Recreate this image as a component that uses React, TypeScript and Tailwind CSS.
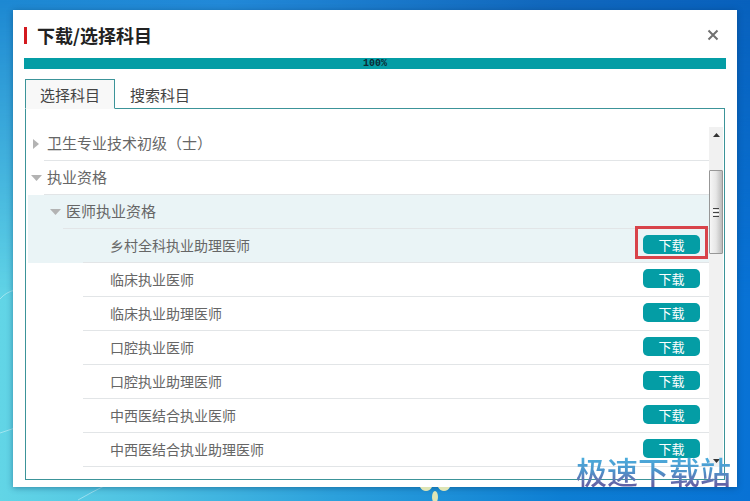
import { useState } from "react";
import clsx from "clsx";

interface Row {
  name: string;
  level: 1 | 2 | 3;
  open?: boolean;
  active?: boolean;
  marked?: boolean;
}

const ROWS: Row[] = [
  { name: "卫生专业技术初级（士）", level: 1 },
  { name: "执业资格", level: 1, open: true },
  { name: "医师执业资格", level: 2, open: true, active: true },
  { name: "乡村全科执业助理医师", level: 3, active: true, marked: true },
  { name: "临床执业医师", level: 3 },
  { name: "临床执业助理医师", level: 3 },
  { name: "口腔执业医师", level: 3 },
  { name: "口腔执业助理医师", level: 3 },
  { name: "中西医结合执业医师", level: 3 },
  { name: "中西医结合执业助理医师", level: 3 },
];

const TABS = ["选择科目", "搜索科目"];

function Arrow({ open }: { open?: boolean }) {
  return (
    <span className="flex w-4 shrink-0 justify-center">
      {open ? (
        <svg width="11" height="6" viewBox="0 0 11 6" fill="#b3b3b3">
          <path d="M0 0h11L5.5 6z" />
        </svg>
      ) : (
        <svg width="6" height="10" viewBox="0 0 6 10" fill="#b3b3b3">
          <path d="M0 0v10l6-5z" />
        </svg>
      )}
    </span>
  );
}

function TreeRow({ row }: { row: Row }) {
  if (row.level === 3) {
    return (
      <li className={clsx("pl-[55px]", row.active && "bg-[#eaf4f6]")}>
        <div className="flex h-[34px] items-center justify-between border-b border-[#e2e5e7] pr-[9px] pb-[2px] pl-[27px] text-sm text-[#666]">
          {row.name}
          <div className="relative flex">
            <button className="h-[19px] w-[57px] rounded-[5px] bg-[#049da5] text-[13px] leading-[19px] text-white">
              下载
            </button>
            {row.marked && (
              <span className="pointer-events-none absolute -inset-x-2 -top-[9px] -bottom-[5px] border-[3px] border-[#d8434a]" />
            )}
          </div>
        </div>
      </li>
    );
  }

  return (
    <li className={clsx("flex", row.level === 2 && "pl-[19px]", row.active && "bg-[#eaf4f6]")}>
      <button className="flex flex-1 items-center text-left text-[15px] text-[#666]">
        <Arrow open={row.open} />
        <span className="flex h-[34px] flex-1 items-center border-b border-[#e2e5e7] pl-[3px]">{row.name}</span>
      </button>
    </li>
  );
}

function ScrollBar() {
  return (
    <div className="flex w-[14px] flex-col items-center bg-[#f1f1f1]">
      <svg className="mt-[6px]" width="7" height="4" viewBox="0 0 7 4" fill="#333">
        <path d="M3.5 0L7 4H0z" />
      </svg>
      <div className="mt-[33px] flex h-[84px] w-full flex-col items-center justify-center gap-px rounded-[1px] border border-[#979797] bg-linear-to-r from-[#f6f6f6] via-[#e6e6e6] to-[#bcbcbc]">
        <span className="h-px w-[6px] bg-[#444]" />
        <span className="h-px w-[6px] bg-white" />
        <span className="h-px w-[6px] bg-[#444]" />
        <span className="h-px w-[6px] bg-white" />
        <span className="h-px w-[6px] bg-[#444]" />
      </div>
      <svg className="mt-auto mb-1" width="7" height="4" viewBox="0 0 7 4" fill="#333">
        <path d="M0 0h7L3.5 4z" />
      </svg>
    </div>
  );
}

export default function App() {
  const [tab, setTab] = useState(0);

  return (
    <div className="relative min-h-screen overflow-hidden bg-[linear-gradient(90deg,#1d88d2_0%,#2289d8_30%,#1268bd_72%,#0861bd_100%)] px-[13px] pt-[10px] pb-[13px] font-['Noto_Sans_CJK_SC',sans-serif]">
      {/* Desktop wallpaper */}
      <div className="absolute inset-0 bg-[linear-gradient(90deg,#62d5e6_0%,#4cc0e2_20%,#2ba0dc_45%,#0d7ed3_75%,#0872d5_100%)] mask-[linear-gradient(transparent,black_60%)]" />
      <svg className="absolute inset-x-0 bottom-0" width="160" height="240" viewBox="0 0 160 240" fill="none" stroke="#fff" strokeOpacity=".4">
        <path d="M0 38Q6 31 15 29M0 172l15-5M78 239q14-8 28-15" />
      </svg>

      <main className="relative bg-white px-[11px] pb-[7px] shadow-[0_1px_6px_rgba(0,50,90,0.45)]">
        <header className="flex h-12 items-center justify-between pt-[2px] pr-[7px]">
          <h1 className="flex items-center gap-[10px] text-lg leading-6 font-bold text-[#222]">
            <span className="h-[17px] w-[3px] bg-[#d3191f]" />
            下载/选择科目
          </h1>
          <button aria-label="关闭">
            <svg width="12" height="12" viewBox="0 0 12 12" stroke="#707070" strokeWidth="2">
              <path d="M1.5 1.5l9 9M10.5 1.5l-9 9" />
            </svg>
          </button>
        </header>

        <div
          role="progressbar"
          aria-valuenow={100}
          className="h-[11px] bg-[#049da5] text-center font-['Liberation_Mono',monospace] text-[10px] leading-[11px] font-bold text-[#0b2a33]"
        >
          100%
        </div>

        <div className="mx-px mt-[10px]">
          <div role="tablist" className="relative z-10 -mb-px flex text-[15px] text-[#444]">
            {TABS.map((name, i) => (
              <button
                key={name}
                role="tab"
                aria-selected={tab === i}
                onClick={() => setTab(i)}
                className={clsx(
                  "h-[30px] border px-[14px] pt-[2px] leading-6",
                  tab === i ? "border-[#3c9499] border-b-[#f8f8f8] bg-[#f8f8f8]" : "border-transparent"
                )}
              >
                {name}
              </button>
            ))}
          </div>

          <div className="flex border border-[#3c9499] pt-[18px] pr-px pb-3 pl-[2px]">
            <ul className="flex-1">
              {ROWS.map((row) => (
                <TreeRow key={row.name} row={row} />
              ))}
            </ul>
            <ScrollBar />
          </div>
        </div>

        <span className="absolute right-[6px] bottom-0 z-20 bg-linear-to-b from-[#4bb2e0] via-[#4c94cb] to-[#655ba0] bg-clip-text text-[31px] leading-8 font-medium text-transparent">
          极速下载站
        </span>
      </main>

      <svg className="absolute bottom-0 left-[56%]" width="32" height="14" viewBox="0 0 32 14" fill="#dfe5b5">
        <path d="M0 0h12q-2 4-6 4T0 0zM18 0h12q-2 4-6 4t-6-4z" />
        <ellipse cx="15" cy="10" rx="3" ry="6" />
      </svg>
    </div>
  );
}
